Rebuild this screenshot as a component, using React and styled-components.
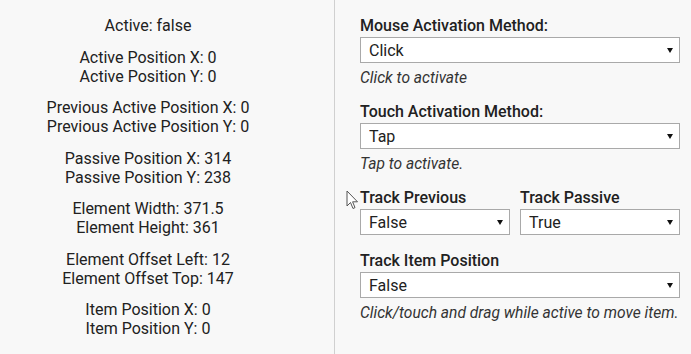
import React from 'react';
import styled, { createGlobalStyle } from 'styled-components';

const GlobalStyle = createGlobalStyle`
  html, body {
    margin: 0;
    padding: 0;
    background: #f8f8f8;
  }
  body {
    font-family: Roboto, "Liberation Sans", sans-serif;
    color: #212121;
  }
`;

const Page = styled.div`
  position: relative;
  display: flex;
  min-height: 100vh;
  width: 691px;
`;

const StatusPanel = styled.div`
  width: 296px;
  padding: 16px 38px 0 0;
  text-align: center;
  font-size: 16px;
  line-height: 19px;
  border-right: 1px solid #d0d0d0;
`;

const StatusGroup = styled.div`
  margin-bottom: 12.5px;
`;

const OptionsPanel = styled.div`
  flex: 1;
  padding: 16px 11px 0 25px;
`;

const Field = styled.div`
  margin-bottom: 14px;
`;

const Label = styled.div`
  font-size: 16px;
  font-weight: 500;
  line-height: 20px;
  margin-bottom: 1px;
`;

const SelectWrap = styled.div`
  position: relative;
  width: 100%;

  &::after {
    content: '';
    position: absolute;
    right: 7px;
    top: 11px;
    border-left: 3px solid transparent;
    border-right: 3px solid transparent;
    border-top: 5px solid #111;
    pointer-events: none;
  }
`;

const Select = styled.select`
  appearance: none;
  -webkit-appearance: none;
  display: block;
  width: 100%;
  height: 26px;
  box-sizing: border-box;
  margin: 0;
  padding: 0 20px 0 8px;
  border: 1px solid #a9a9a9;
  border-radius: 0;
  background: #fff;
  font-family: Roboto, "Liberation Sans", sans-serif;
  font-size: 16px;
  color: #212121;
`;

const Help = styled.div`
  margin-top: 5px;
  font-size: 15.6px;
  font-style: italic;
  line-height: 20px;
  color: #333;
`;

const Row = styled.div`
  display: grid;
  grid-template-columns: 150px 160px;
  column-gap: 10px;
  margin-bottom: 16px;
`;

const Cursor = styled.svg`
  position: absolute;
  left: 346px;
  top: 190px;
  pointer-events: none;
`;

const status = [
  ['Active: false'],
  ['Active Position X: 0', 'Active Position Y: 0'],
  ['Previous Active Position X: 0', 'Previous Active Position Y: 0'],
  ['Passive Position X: 314', 'Passive Position Y: 238'],
  ['Element Width: 371.5', 'Element Height: 361'],
  ['Element Offset Left: 12', 'Element Offset Top: 147'],
  ['Item Position X: 0', 'Item Position Y: 0'],
];

const Dropdown = ({ value, options }) => (
  <SelectWrap>
    <Select defaultValue={value}>
      {options.map((o) => (
        <option key={o}>{o}</option>
      ))}
    </Select>
  </SelectWrap>
);

const App = () => {
  return (
    <>
      <GlobalStyle />
      <Page>
        <StatusPanel>
          {status.map((lines, i) => (
            <StatusGroup key={i}>
              {lines.map((l) => (
                <div key={l}>{l}</div>
              ))}
            </StatusGroup>
          ))}
        </StatusPanel>

        <OptionsPanel>
          <Field>
            <Label>Mouse Activation Method:</Label>
            <Dropdown value="Click" options={['Click', 'Hover', 'Mouse Down']} />
            <Help>Click to activate</Help>
          </Field>

          <Field>
            <Label>Touch Activation Method:</Label>
            <Dropdown value="Tap" options={['Tap', 'Double Tap', 'Long Touch', 'Touch']} />
            <Help>Tap to activate.</Help>
          </Field>

          <Row>
            <div>
              <Label>Track Previous</Label>
              <Dropdown value="False" options={['True', 'False']} />
            </div>
            <div>
              <Label>Track Passive</Label>
              <Dropdown value="True" options={['True', 'False']} />
            </div>
          </Row>

          <Field>
            <Label>Track Item Position</Label>
            <Dropdown value="False" options={['True', 'False']} />
            <Help>Click/touch and drag while active to move item.</Help>
          </Field>
        </OptionsPanel>

        {/* mouse pointer captured in the screenshot */}
        <Cursor width="13" height="20" viewBox="0 0 13 20">
          <path
            d="M1 1 L1 16 L4.5 12.5 L7 18.5 L9 17.6 L6.6 11.8 L11.5 11.8 Z"
            fill="#fff"
            stroke="#555"
            strokeWidth="1"
            strokeLinejoin="round"
          />
        </Cursor>
      </Page>
    </>
  );
};

export default App;
